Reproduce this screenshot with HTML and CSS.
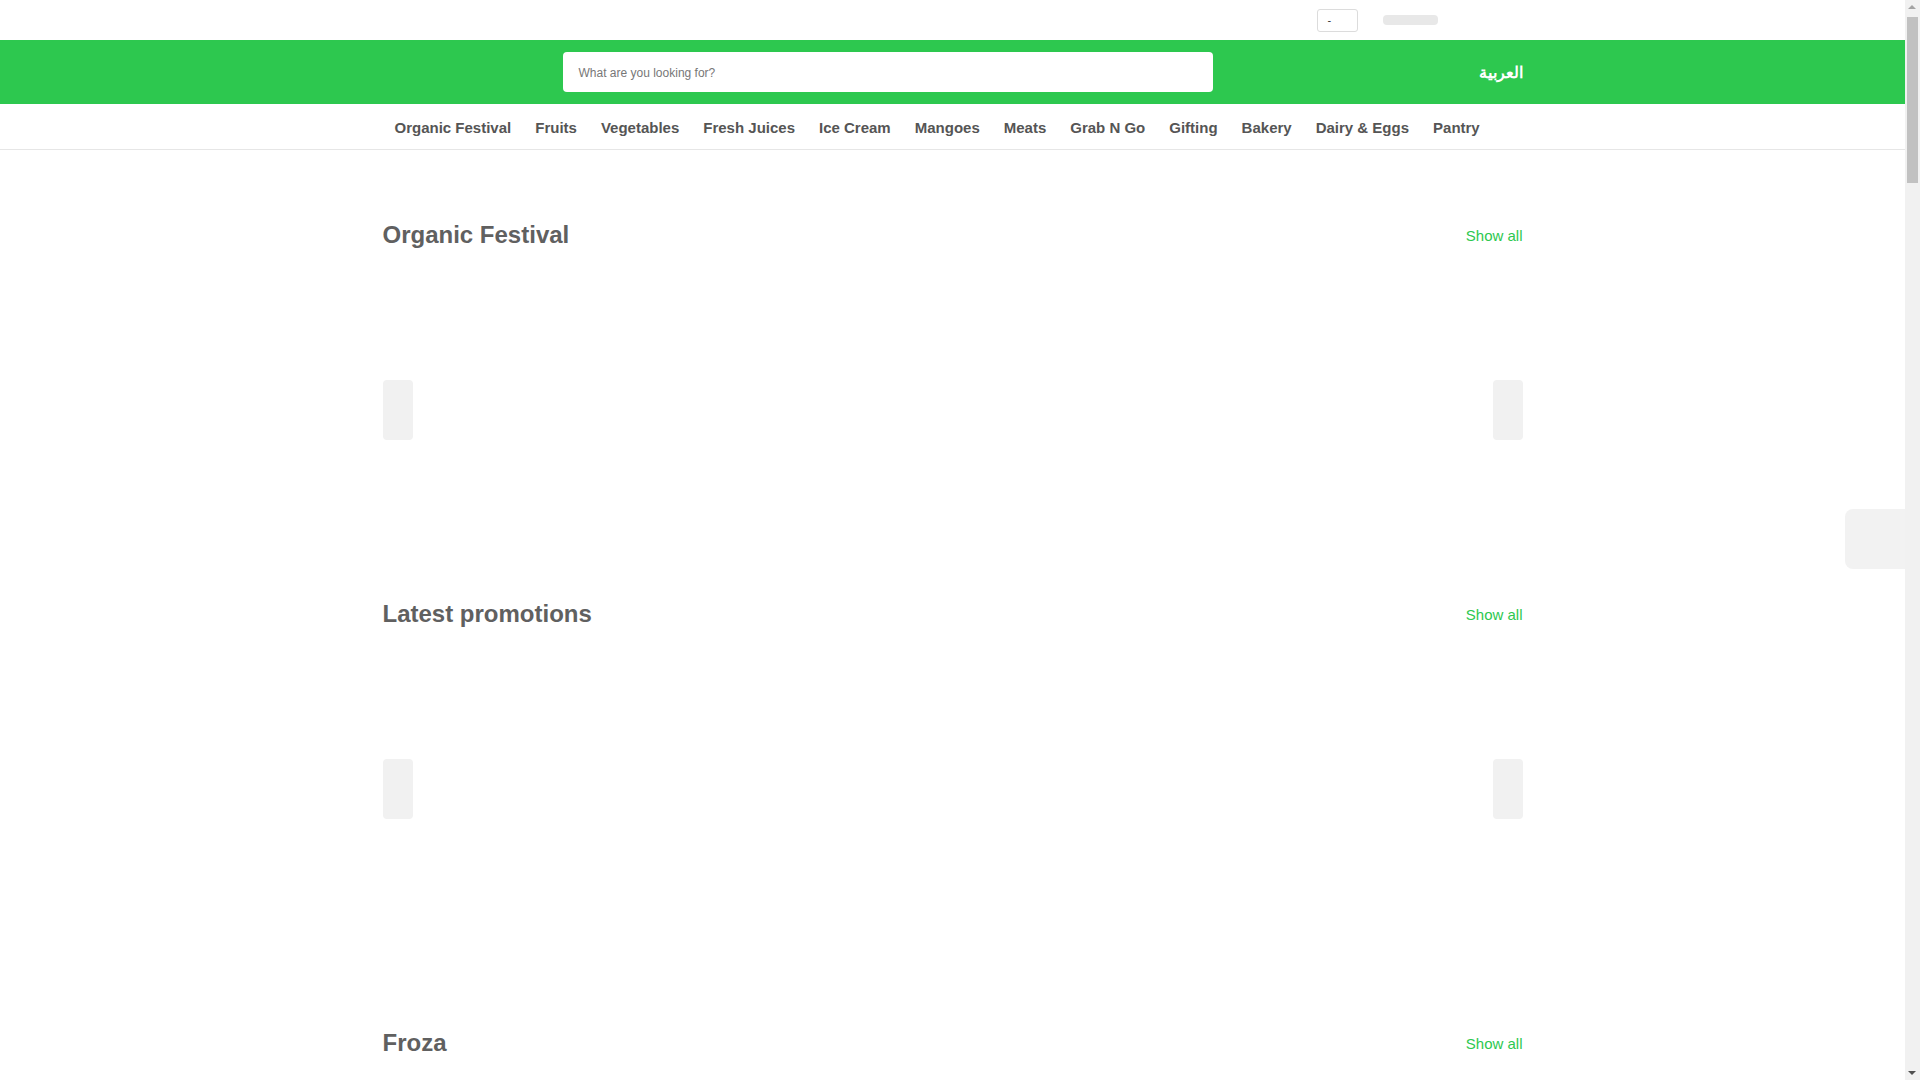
FILE: index.html
```html
<!DOCTYPE html>
<html lang="en">
<head>
<meta charset="utf-8">
<title>Store</title>
<link rel="stylesheet" href="styles.css">
</head>
<body>
<div class="page">
<div class="topbar">
  <div class="container topbar-inner">
    <div class="select-box"><span class="select-dash">-</span></div>
    <div class="pill"></div>
  </div>
</div>
<header class="header">
  <div class="container header-inner">
    <div class="logo-slot"></div>
    <div class="search"><span class="search-placeholder">What are you looking for?</span></div>
    <a class="lang" href="#" lang="ar" dir="rtl">العربية</a>
  </div>
</header>
<nav class="nav">
  <ul class="container nav-list">
    <li class="nav-item">Organic Festival</li>
    <li class="nav-item">Fruits</li>
    <li class="nav-item">Vegetables</li>
    <li class="nav-item">Fresh Juices</li>
    <li class="nav-item">Ice Cream</li>
    <li class="nav-item">Mangoes</li>
    <li class="nav-item">Meats</li>
    <li class="nav-item">Grab N Go</li>
    <li class="nav-item">Gifting</li>
    <li class="nav-item">Bakery</li>
    <li class="nav-item">Dairy &amp; Eggs</li>
    <li class="nav-item">Pantry</li>
  </ul>
</nav>
<main class="container main">
  <section class="section">
    <div class="section-head">
      <h2 class="section-title">Organic Festival</h2>
      <a class="show-all" href="#">Show all</a>
    </div>
    <div class="carousel">
      <div class="arrow"></div>
      <div class="arrow"></div>
    </div>
  </section>
  <section class="section section-wide">
    <div class="section-head">
      <h2 class="section-title">Latest promotions</h2>
      <a class="show-all" href="#">Show all</a>
    </div>
    <div class="carousel">
      <div class="arrow"></div>
      <div class="arrow"></div>
    </div>
  </section>
  <section class="section">
    <div class="section-head">
      <h2 class="section-title">Froza</h2>
      <a class="show-all" href="#">Show all</a>
    </div>
    <div class="carousel">
      <div class="arrow"></div>
      <div class="arrow"></div>
    </div>
  </section>
</main>
</div>
<div class="side-tab"></div>
<div class="scrollbar">
  <div class="scroll-up"></div>
  <div class="scroll-thumb"></div>
  <div class="scroll-down"></div>
</div>
</body>
</html>
```
FILE: styles.css
```css
* { box-sizing: border-box; }
html, body { margin: 0; padding: 0; }
body {
  font-family: "Liberation Sans", Arial, sans-serif;
  color: #555;
  background: #fff;
}
.page { margin-right: 15px; }
.container {
  width: 1140px;
  margin: 0 auto;
}
.topbar { height: 40px; background: #fff; }
.topbar-inner {
  height: 40px;
  display: flex;
  align-items: center;
  justify-content: flex-end;
  padding-right: 85px;
}
.select-box {
  width: 41px;
  height: 23px;
  margin-top: 1px;
  border: 1px solid #dcdcdc;
  border-radius: 3px;
  display: flex;
  align-items: center;
  padding-left: 10px;
  font-size: 11px;
  color: #333;
}
.select-dash { line-height: 1; }
.pill {
  width: 55px;
  height: 10px;
  margin-left: 25px;
  margin-top: -1px;
  background: #e8e8e8;
  border-radius: 4px;
}
.header { background: #2dc84f; height: 64px; }
.header-inner {
  height: 64px;
  display: flex;
  align-items: center;
}
.logo-slot { width: 180px; height: 40px; }
.search {
  width: 650px;
  height: 40px;
  background: #fff;
  border-radius: 4px;
  display: flex;
  align-items: center;
  padding: 2px 0 0 16px;
}
.search-placeholder { font-size: 12px; color: #777; }
.lang {
  margin-left: auto;
  color: #fff;
  font-weight: bold;
  font-size: 16px;
  text-decoration: none;
}
.nav {
  border-bottom: 1px solid #e6e6e6;
  height: 46px;
}
.nav-list {
  list-style: none;
  margin-top: 0;
  margin-bottom: 0;
  padding: 2px 0 0 0;
  display: flex;
  align-items: center;
  height: 45px;
}
.nav-item {
  padding: 0 12px;
  font-size: 15px;
  font-weight: bold;
  color: #555;
  white-space: nowrap;
}
.main { padding-top: 65px; }
.section { margin-bottom: 27px; }
.section-wide { margin-bottom: 77px; }
.section-head {
  height: 40px;
  display: flex;
  align-items: center;
  justify-content: space-between;
}
.section-title {
  margin: 0;
  font-size: 24px;
  font-weight: bold;
  color: #606060;
}
.show-all {
  font-size: 15px;
  color: #2dc84f;
  text-decoration: none;
}
.carousel {
  height: 312px;
  padding-bottom: 2px;
  display: flex;
  align-items: center;
  justify-content: space-between;
}
.arrow {
  width: 30px;
  height: 60px;
  background: #f1f1f1;
  border-radius: 4px;
}
.side-tab {
  position: fixed;
  right: 15px;
  top: 509px;
  width: 60px;
  height: 60px;
  background: #f2f2f2;
  border-radius: 8px 0 0 8px;
}
.scrollbar {
  position: fixed;
  top: 0;
  right: 0;
  width: 15px;
  height: 100vh;
  background: #f1f1f1;
}
.scroll-up {
  position: absolute;
  top: 5px;
  left: 3px;
  width: 0;
  height: 0;
  border-left: 4.5px solid transparent;
  border-right: 4.5px solid transparent;
  border-bottom: 4.5px solid #a3a3a3;
}
.scroll-thumb {
  position: absolute;
  top: 17px;
  left: 2px;
  width: 11px;
  height: 166px;
  background: #c1c1c1;
}
.scroll-down {
  position: absolute;
  bottom: 5px;
  left: 3px;
  width: 0;
  height: 0;
  border-left: 4.5px solid transparent;
  border-right: 4.5px solid transparent;
  border-top: 4.5px solid #505050;
}
```
